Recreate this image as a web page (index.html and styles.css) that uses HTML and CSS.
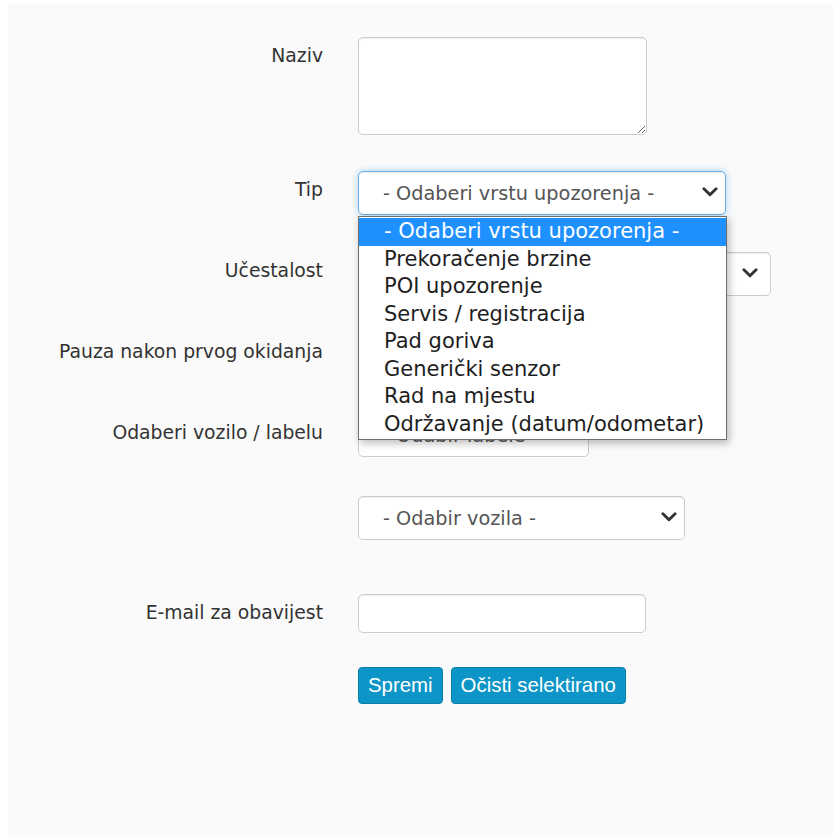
FILE: index.html
```html
<!DOCTYPE html>
<html lang="hr">
<head>
<meta charset="utf-8">
<title>Novo upozorenje</title>
<link rel="stylesheet" href="styles.css">
</head>
<body>
<div class="panel">
  <form class="form">
    <div class="row row-naziv">
      <label class="lbl">Naziv</label>
      <div class="ctl"><textarea class="area"></textarea></div>
    </div>

    <div class="row row-tip">
      <label class="lbl">Tip</label>
      <div class="ctl">
        <div class="pick pick-tip">
          <select class="sel sel-focus">
            <option>- Odaberi vrstu upozorenja -</option>
          </select>
          <svg class="chev" viewBox="0 0 14 9"><path d="M1.5 1.5 L7 7 L12.5 1.5"/></svg>
          <ul class="menu">
            <li class="menu-item is-active">- Odaberi vrstu upozorenja -</li>
            <li class="menu-item">Prekoračenje brzine</li>
            <li class="menu-item">POI upozorenje</li>
            <li class="menu-item">Servis / registracija</li>
            <li class="menu-item">Pad goriva</li>
            <li class="menu-item">Generički senzor</li>
            <li class="menu-item">Rad na mjestu</li>
            <li class="menu-item">Održavanje (datum/odometar)</li>
          </ul>
        </div>
      </div>
    </div>

    <div class="row row-freq">
      <label class="lbl">Učestalost</label>
      <div class="ctl">
        <div class="pick pick-freq">
          <select class="sel"><option>- Odaberi učestalost -</option></select>
          <svg class="chev chev-wide" viewBox="0 0 14 9"><path d="M1.5 1.5 L7 7 L12.5 1.5"/></svg>
        </div>
      </div>
    </div>

    <div class="row row-pause">
      <label class="lbl">Pauza nakon prvog okidanja</label>
      <div class="ctl"><input class="field field-pause" type="text"></div>
    </div>

    <div class="row row-label">
      <label class="lbl">Odaberi vozilo / labelu</label>
      <div class="ctl">
        <div class="pick pick-label">
          <select class="sel"><option>- Odabir labele -</option></select>
          <svg class="chev" viewBox="0 0 14 9"><path d="M1.5 1.5 L7 7 L12.5 1.5"/></svg>
        </div>
      </div>
    </div>

    <div class="row row-vehicle">
      <span class="lbl"></span>
      <div class="ctl">
        <div class="pick pick-vehicle">
          <select class="sel"><option>- Odabir vozila -</option></select>
          <svg class="chev" viewBox="0 0 14 9"><path d="M1.5 1.5 L7 7 L12.5 1.5"/></svg>
        </div>
      </div>
    </div>

    <div class="row row-mail">
      <label class="lbl">E-mail za obavijest</label>
      <div class="ctl"><input class="field field-mail" type="text"></div>
    </div>

    <div class="row row-actions">
      <span class="lbl"></span>
      <div class="ctl actions">
        <button type="button" class="btn">Spremi</button>
        <button type="button" class="btn">Očisti selektirano</button>
      </div>
    </div>
  </form>
</div>
</body>
</html>
```

FILE: styles.css
```css
html, body {
  margin: 0;
  padding: 0;
  background: #ffffff;
}

.panel {
  margin: 4px 0 0 8px;
  height: 833px;
  box-sizing: border-box;
  padding-top: 33px;
  background: #fafafa;
  font-family: "DejaVu Sans", Verdana, sans-serif;
  color: #333333;
}

.form {
  display: flex;
  flex-direction: column;
}

.row {
  display: flex;
  align-items: flex-start;
}

.row-naziv   { margin-bottom: 36px; }
.row-tip     { margin-bottom: 37px; }
.row-freq    { margin-bottom: 37px; }
.row-pause   { margin-bottom: 42px; }
.row-label   { margin-bottom: 39px; }
.row-vehicle { margin-bottom: 54px; }
.row-mail    { margin-bottom: 34px; }

.lbl {
  flex: 0 0 315px;
  margin-right: 35px;
  padding-top: 8px;
  text-align: right;
  font-size: 18.8px;
  line-height: 22px;
  color: #333333;
  white-space: nowrap;
}

.ctl {
  flex: 0 0 auto;
}

/* text inputs */
.area,
.field {
  display: block;
  box-sizing: border-box;
  border: 1px solid #cccccc;
  border-radius: 5px;
  background: #ffffff;
  box-shadow: inset 0 1px 1px rgba(0, 0, 0, 0.075);
  margin: 0;
  font-family: inherit;
}

.area {
  width: 289px;
  height: 98px;
  resize: both;
}

.field {
  height: 39px;
}

.field-mail  { width: 288px; }
.field-pause { width: 288px; }

/* dropdowns */
.pick {
  position: relative;
}

.sel {
  display: block;
  -webkit-appearance: none;
  appearance: none;
  box-sizing: border-box;
  height: 44px;
  margin: 0;
  padding: 0 30px 0 24px;
  border: 1px solid #cccccc;
  border-radius: 5px;
  background: #ffffff;
  box-shadow: inset 0 1px 1px rgba(0, 0, 0, 0.075);
  font-family: "DejaVu Sans", Verdana, sans-serif;
  font-size: 19.3px;
  color: #555555;
}

.sel-focus {
  border-color: #66afe9;
  box-shadow: inset 0 1px 1px rgba(0, 0, 0, 0.075), 0 0 7px rgba(102, 175, 233, 0.55);
}

.pick-tip .sel     { width: 368px; }
.pick-freq .sel    { width: 413px; }
.pick-label .sel   { width: 231px; height: 43px; }
.pick-vehicle .sel { width: 327px; }

.chev {
  position: absolute;
  right: 8px;
  top: 50%;
  width: 16px;
  height: 10px;
  margin-top: -6px;
  pointer-events: none;
}

.chev-wide {
  right: 13px;
}

.chev path {
  fill: none;
  stroke: #333333;
  stroke-width: 2.6;
  stroke-linecap: round;
  stroke-linejoin: round;
}

/* open option list of the type dropdown */
.menu {
  position: absolute;
  left: 0;
  top: 45px;
  z-index: 5;
  width: 369px;
  box-sizing: border-box;
  margin: 0;
  padding: 1px 0 1px;
  list-style: none;
  background: #ffffff;
  border: 1px solid #6f6f6f;
  box-shadow: 2px 3px 8px rgba(0, 0, 0, 0.28);
}

.menu-item {
  height: 27.5px;
  line-height: 27.5px;
  padding-left: 25px;
  font-family: "DejaVu Sans", Verdana, sans-serif;
  font-size: 21px;
  color: #1e1e1e;
  white-space: nowrap;
}

.menu-item.is-active {
  background: #1e90ff;
  color: #ffffff;
}

/* buttons */
.actions {
  display: flex;
  gap: 8px;
}

.btn {
  height: 37px;
  margin: 0;
  padding: 0 9px;
  border: 1px solid #0a7fa9;
  border-radius: 4px;
  background: #0c95c6;
  color: #ffffff;
  font-family: "Liberation Sans", Arial, sans-serif;
  font-size: 20.4px;
  line-height: 35px;
  cursor: pointer;
}
```
